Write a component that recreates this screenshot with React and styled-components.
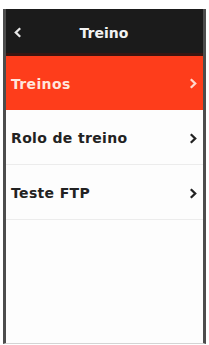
import React from "react";
import styled, { createGlobalStyle } from "styled-components";

const Global = createGlobalStyle`
  html, body { margin: 0; padding: 0; background: #ffffff; }
  body { font-family: "DejaVu Sans", "Liberation Sans", sans-serif; }
`;

const Device = styled.div`
  box-sizing: border-box;
  margin: 9px 0 0 3px;
  width: 203px;
  height: 335px;
  border-left: 3px solid #4d4d4d;
  border-right: 3px solid #4d4d4d;
  border-bottom: 1px solid #d4d4d4;
  background: #fdfdfd;
  display: flex;
  flex-direction: column;
`;

const Header = styled.div`
  height: 44px;
  background: #1b1b1b;
  border-bottom: 3px solid #3a1511;
  display: flex;
  align-items: center;
  padding: 3px 8px 0 8px;
  box-sizing: border-box;
  height: 47px;
`;

const Title = styled.div`
  flex: 1;
  text-align: center;
  color: #f2f2f2;
  font-weight: bold;
  font-size: 14px;
  margin-right: 9px;
`;

const Row = styled.div`
  box-sizing: border-box;
  height: ${p => (p.$active ? "54px" : "55px")};
  display: flex;
  align-items: center;
  justify-content: space-between;
  padding: 2px 6px 0 5px;
  background: ${p => (p.$active ? "#fe3d1b" : "transparent")};
  border-bottom: 1px solid ${p => (p.$active ? "#fe3d1b" : "#ececec")};
  color: ${p => (p.$active ? "#ffe6dc" : "#222222")};
`;

const Label = styled.span`
  font-weight: bold;
  font-size: 14px;
  letter-spacing: 0.35px;
`;

const Chevron = ({ dir = "right", color }) => (
  <svg width="8" height="11" viewBox="0 0 8 11">
    <path
      d={dir === "right" ? "M1.8 1.2 L6.2 5.5 L1.8 9.8" : "M6.2 1.2 L1.8 5.5 L6.2 9.8"}
      fill="none"
      stroke={color}
      strokeWidth="2.3"
      strokeLinecap="butt"
      strokeLinejoin="miter"
    />
  </svg>
);

const items = [
  { label: "Treinos", active: true },
  { label: "Rolo de treino" },
  { label: "Teste FTP" },
];

export default function App() {
  return (
    <>
      <Global />
      <Device>
        <Header>
          <Chevron dir="left" color="#e8e8e8" />
          <Title>Treino</Title>
        </Header>
        {items.map(it => (
          <Row key={it.label} $active={it.active}>
            <Label>{it.label}</Label>
            <Chevron color={it.active ? "#ffd8cc" : "#222"} />
          </Row>
        ))}
      </Device>
    </>
  );
}
